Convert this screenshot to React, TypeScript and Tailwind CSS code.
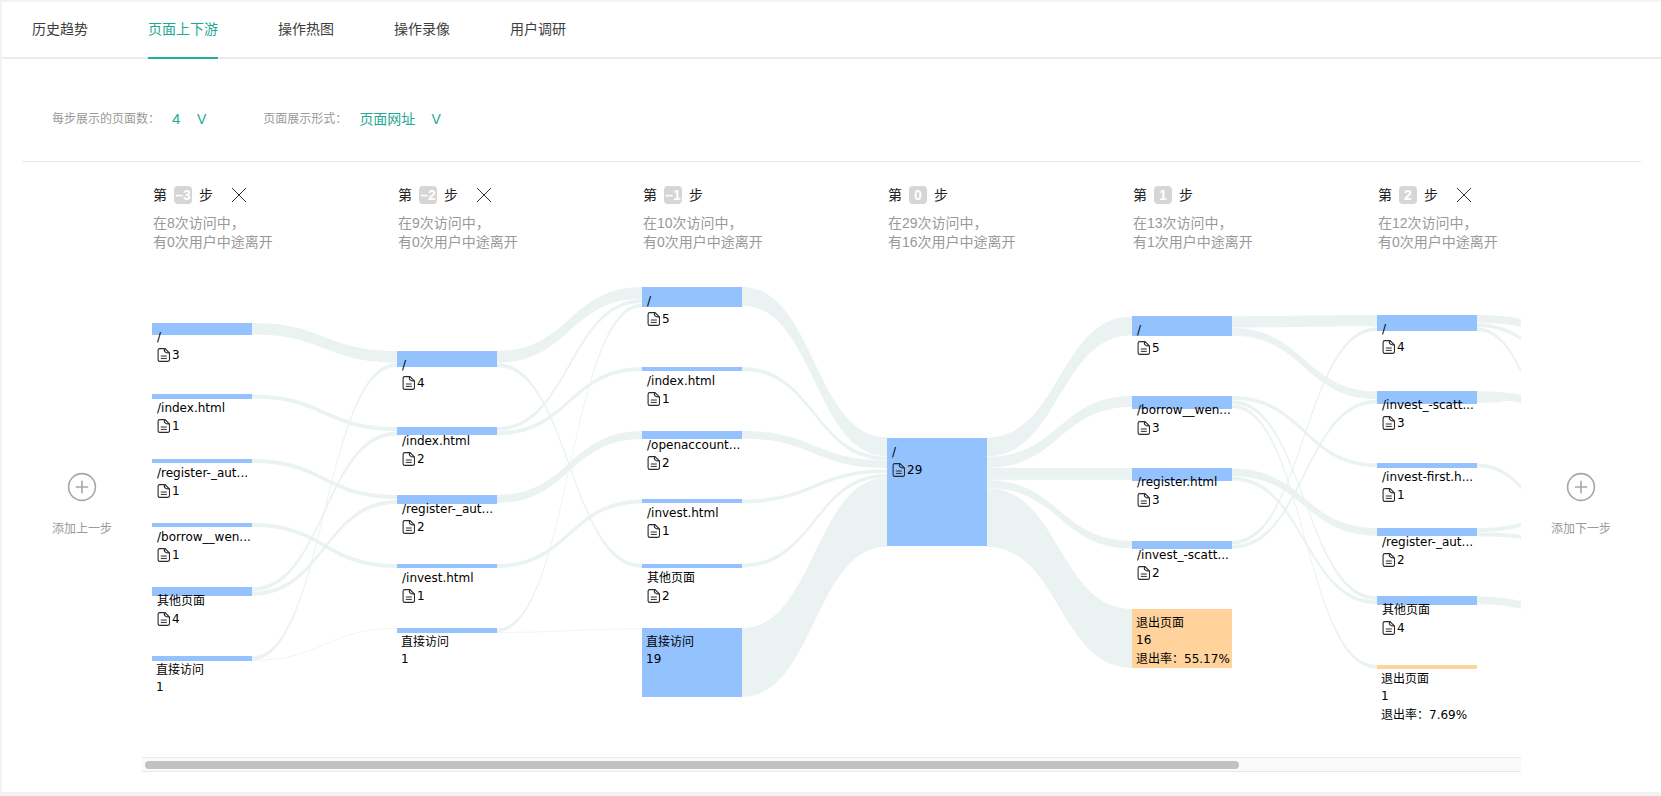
import { useEffect, useRef, useState } from "react";
import type { ReactNode } from "react";

const NODE_WIDTH = 100;
const STEP_GAP = 245;
const FIRST_NODE_X = 10;
const CANVAS_WIDTH = 1730;
const CANVAS_HEIGHT = 477;

type Kind = "page" | "direct" | "exit";

interface FlowNode {
  y: number;
  h: number;
  label: string;
  count: number;
  kind?: Kind;
  rate?: string;
}

interface Step {
  index: string;
  visits: number;
  left: number;
  removable?: boolean;
  nodes: FlowNode[];
}

const steps: Step[] = [
  {
    index: "–3",
    visits: 8,
    left: 0,
    removable: true,
    nodes: [
      { y: 43, h: 12, label: "/", count: 3 },
      { y: 114, h: 5, label: "/index.html", count: 1 },
      { y: 179, h: 4, label: "/register-_aut...", count: 1 },
      { y: 243, h: 4, label: "/borrow__wen...", count: 1 },
      { y: 307, h: 9, label: "其他页面", count: 4 },
      { y: 376, h: 5, label: "直接访问", count: 1, kind: "direct" },
    ],
  },
  {
    index: "–2",
    visits: 9,
    left: 0,
    removable: true,
    nodes: [
      { y: 71, h: 16, label: "/", count: 4 },
      { y: 147, h: 8, label: "/index.html", count: 2 },
      { y: 215, h: 9, label: "/register-_aut...", count: 2 },
      { y: 284, h: 4, label: "/invest.html", count: 1 },
      { y: 348, h: 5, label: "直接访问", count: 1, kind: "direct" },
    ],
  },
  {
    index: "–1",
    visits: 10,
    left: 0,
    nodes: [
      { y: 7, h: 20, label: "/", count: 5 },
      { y: 87, h: 4, label: "/index.html", count: 1 },
      { y: 151, h: 8, label: "/openaccount...", count: 2 },
      { y: 219, h: 4, label: "/invest.html", count: 1 },
      { y: 284, h: 4, label: "其他页面", count: 2 },
      { y: 348, h: 69, label: "直接访问", count: 19, kind: "direct" },
    ],
  },
  {
    index: "0",
    visits: 29,
    left: 16,
    nodes: [{ y: 158, h: 108, label: "/", count: 29 }],
  },
  {
    index: "1",
    visits: 13,
    left: 1,
    nodes: [
      { y: 36, h: 20, label: "/", count: 5 },
      { y: 116, h: 13, label: "/borrow__wen...", count: 3 },
      { y: 188, h: 13, label: "/register.html", count: 3 },
      { y: 261, h: 8, label: "/invest_-scatt...", count: 2 },
      { y: 329, h: 59, label: "退出页面", count: 16, kind: "exit", rate: "55.17%" },
    ],
  },
  {
    index: "2",
    visits: 12,
    left: 0,
    removable: true,
    nodes: [
      { y: 35, h: 16, label: "/", count: 4 },
      { y: 111, h: 13, label: "/invest_-scatt...", count: 3 },
      { y: 183, h: 5, label: "/invest-first.h...", count: 1 },
      { y: 248, h: 8, label: "/register-_aut...", count: 2 },
      { y: 316, h: 9, label: "其他页面", count: 4 },
      { y: 385, h: 4, label: "退出页面", count: 1, kind: "exit", rate: "7.69%" },
    ],
  },
];

// Each ribbon: [column it leaves, start y, end y, thickness]
const ribbons: [number, number, number, number][] = [
  [0, 43, 71, 11.5],
  [0, 114.5, 147, 4],
  [0, 179, 215, 4],
  [0, 243, 284, 4],
  [0, 307.3, 151.5, 4],
  [0, 311.7, 220, 4],
  [0, 376.3, 83, 4],
  [0, 380, 348.3, 0.7],
  [1, 71, 7, 11.7],
  [1, 83.2, 283.8, 4],
  [1, 147, 19.3, 3.7],
  [1, 151.3, 87, 4],
  [1, 215, 151, 8],
  [1, 284, 219.5, 4],
  [1, 348.5, 23.7, 3.5],
  [1, 352, 348.5, 0.7],
  [2, 7, 157.5, 18.7],
  [2, 87, 176.5, 4],
  [2, 151, 180.5, 7.7],
  [2, 219.5, 189.4, 3.7],
  [2, 283.8, 193.8, 3.7],
  [2, 348, 198, 68.7],
  [3, 157.5, 36.5, 18.7],
  [3, 176.7, 116, 11],
  [3, 188, 188, 11.7],
  [3, 200.3, 260.8, 7.7],
  [3, 208.3, 329, 58.7],
  [4, 36.2, 35, 11.2],
  [4, 48, 111.3, 7.7],
  [4, 116, 183.2, 3.8],
  [4, 120.3, 316.3, 3.7],
  [4, 124.4, 385, 3.7],
  [4, 188.6, 248, 7.7],
  [4, 196.8, 320.5, 3.7],
  [4, 260.7, 47.3, 3.7],
  [4, 265, 119.8, 3.7],
  [5, 35, 59, 7.7],
  [5, 43.2, 126, 3.7],
  [5, 47.4, 304, 3.7],
  [5, 111.3, 135, 7.8],
  [5, 119.2, 89, 3.7],
  [5, 183.5, 317, 3.8],
  [5, 248, 216, 4],
  [5, 252.5, 266, 4],
  [5, 316.5, 344, 7.7],
];

function ribbonPath([column, from, to, size]: [number, number, number, number]) {
  const x0 = FIRST_NODE_X + column * STEP_GAP + NODE_WIDTH;
  const x1 = x0 + STEP_GAP - NODE_WIDTH;
  const mid = (x0 + x1) / 2;
  return `M${x0} ${from}C${mid} ${from} ${mid} ${to} ${x1} ${to}V${to + size}C${mid} ${to + size} ${mid} ${from + size} ${x0} ${from + size}Z`;
}

function PageIcon() {
  return (
    <svg width="13" height="14" viewBox="0 0 13 14" fill="none" stroke="#2b2b2b" strokeWidth="1.1" className="shrink-0" aria-hidden="true">
      <path d="M8 .6H2.8C1.7.6 1.1 1.2 1.1 2.2v9.5c0 1.1.6 1.7 1.7 1.7h8c1.1 0 1.7-.6 1.7-1.7V5Z" />
      <path d="M8 .8c-.9 1.1-1 2 .1 3 1 1 2.3 1.2 4.2 1.1" />
      <path d="M3.8 8h6M3.8 10.4h6" strokeWidth="1" />
    </svg>
  );
}

function CloseIcon() {
  return (
    <svg width="16" height="16" viewBox="0 0 16 16" stroke="#333" strokeWidth="1" aria-hidden="true">
      <path d="M1 1l14 14M15 1L1 15" />
    </svg>
  );
}

function NodeBox({ node, column }: { node: FlowNode; column: number }) {
  const isPage = !node.kind;
  return (
    <li className="absolute w-[100px]" style={{ left: FIRST_NODE_X + column * STEP_GAP, top: node.y }}>
      <div
        className={node.kind === "exit" ? "absolute inset-x-0 top-0 bg-[#ffd39b]" : "absolute inset-x-0 top-0 bg-[#93c2ff]"}
        style={{ height: node.h }}
      />
      <div
        className={
          isPage
            ? "relative whitespace-nowrap pt-[5px] pl-[5px] text-xs text-black"
            : "relative whitespace-nowrap pt-[5px] pl-1 text-xs text-black"
        }
      >
        <p className="leading-[18px]">{node.label}</p>
        {isPage ? (
          <p className="flex items-center gap-0.5 leading-[18px]">
            <PageIcon />
            {node.count}
          </p>
        ) : (
          <p className="leading-4">{node.count}</p>
        )}
        {node.rate && <p className="leading-[22px]">退出率：{node.rate}</p>}
      </div>
    </li>
  );
}

function StepHeader({ step }: { step: Step }) {
  return (
    <div className="w-[245px] shrink-0">
      <div className="flex h-[18px] items-center text-sm text-[#222]">
        <span>第</span>
        <span className="mx-[7px] flex size-[18px] items-center justify-center overflow-hidden rounded bg-[#d6d6d6] font-bold text-white">
          {step.index}
        </span>
        <span>步</span>
        {step.removable && (
          <button type="button" aria-label="×" className="ml-[18px] cursor-pointer">
            <CloseIcon />
          </button>
        )}
      </div>
      <p className="mt-[10px] text-sm leading-[19px] text-[#999]">
        在{step.visits}次访问中，
        <br />
        有{step.left}次用户中途离开
      </p>
    </div>
  );
}

function AddStep({ children }: { children: ReactNode }) {
  return (
    <button type="button" className="mt-[286px] flex shrink-0 cursor-pointer flex-col items-center gap-[18px] text-xs text-[#999]">
      <svg width="30" height="30" viewBox="0 0 30 30" fill="none" stroke="#a6a6a6" strokeWidth="1.6" aria-hidden="true">
        <circle cx="15" cy="15" r="13.4" />
        <path d="M8.8 15h12.4M15 8.8v12.4" />
      </svg>
      <span className="leading-[18px]">{children}</span>
    </button>
  );
}

function FlowCanvas() {
  const viewport = useRef<HTMLDivElement>(null);
  const [thumb, setThumb] = useState({ left: 0, width: 79.6 });

  const update = () => {
    const el = viewport.current;
    if (!el) return;
    setThumb({
      left: (el.scrollLeft / el.scrollWidth) * 100,
      width: (el.clientWidth / el.scrollWidth) * 100,
    });
  };

  useEffect(() => {
    update();
    window.addEventListener("resize", update);
    return () => window.removeEventListener("resize", update);
  }, []);

  return (
    <div className="min-w-0 flex-1">
      <div ref={viewport} onScroll={update} className="overflow-x-auto overflow-y-hidden [scrollbar-width:none]">
        <div className="w-[1730px]">
          <div className="flex pl-[11px]">
            {steps.map((step) => (
              <StepHeader key={step.index} step={step} />
            ))}
          </div>
          <div className="relative mt-7 h-[477px] font-['DejaVu_Sans','Noto_Sans_CJK_SC',sans-serif]">
            <svg width={CANVAS_WIDTH} height={CANVAS_HEIGHT} fill="#eaf3f2" className="block" aria-hidden="true">
              {ribbons.map((ribbon, i) => (
                <path key={i} d={ribbonPath(ribbon)} />
              ))}
            </svg>
            {steps.map((step, column) => (
              <ul key={step.index}>
                {step.nodes.map((node) => (
                  <NodeBox key={node.y} node={node} column={column} />
                ))}
              </ul>
            ))}
          </div>
        </div>
      </div>
      <div className="border-y border-[#e8e8e8] bg-[#fafafa] px-[3px] pt-[3px] pb-0.5">
        <div className="h-2 rounded-full bg-[#c1c1c1]" style={{ marginLeft: `${thumb.left}%`, width: `${thumb.width}%` }} />
      </div>
    </div>
  );
}

const tabs = ["历史趋势", "页面上下游", "操作热图", "操作录像", "用户调研"];

export default function App() {
  const [active, setActive] = useState("页面上下游");

  return (
    <div className="bg-[#f3f3f3] pt-0.5 pb-1 pl-0.5 font-['Liberation_Sans','Noto_Sans_CJK_SC',sans-serif]">
      <main className="bg-white">
        <nav className="flex h-[57px] gap-[60px] border-b-2 border-[#ebebeb] pl-[30px]">
          {tabs.map((tab) => (
            <button
              key={tab}
              type="button"
              onClick={() => setActive(tab)}
              className={
                tab === active
                  ? "h-[57px] cursor-pointer border-b-2 border-[#1fb19d] pb-0.5 text-sm text-[#1fa896]"
                  : "h-[57px] cursor-pointer border-b-2 border-transparent pb-0.5 text-sm text-[#3d3d3d]"
              }
            >
              {tab}
            </button>
          ))}
        </nav>

        <form className="mx-5 flex h-[103px] items-center border-b border-[#e8e8e8] pt-[17px] pl-[30px] text-xs text-[#999]">
          <label htmlFor="page-count">每步展示的页面数：</label>
          <div className="ml-3 flex items-center gap-4 text-[#1fa896]">
            <select id="page-count" className="appearance-none bg-transparent text-[15px]">
              <option>4</option>
            </select>
            <span className="text-sm" aria-hidden="true">V</span>
          </div>
          <label htmlFor="page-form" className="ml-[57px]">页面展示形式：</label>
          <div className="ml-3 flex items-center gap-4 text-[#1fa896]">
            <select id="page-form" className="appearance-none bg-transparent text-sm">
              <option>页面网址</option>
            </select>
            <span className="text-sm" aria-hidden="true">V</span>
          </div>
        </form>

        <section className="flex items-start gap-[30px] px-[50px] pt-6 pb-5">
          <AddStep>添加上一步</AddStep>
          <FlowCanvas />
          <AddStep>添加下一步</AddStep>
        </section>
      </main>
    </div>
  );
}
